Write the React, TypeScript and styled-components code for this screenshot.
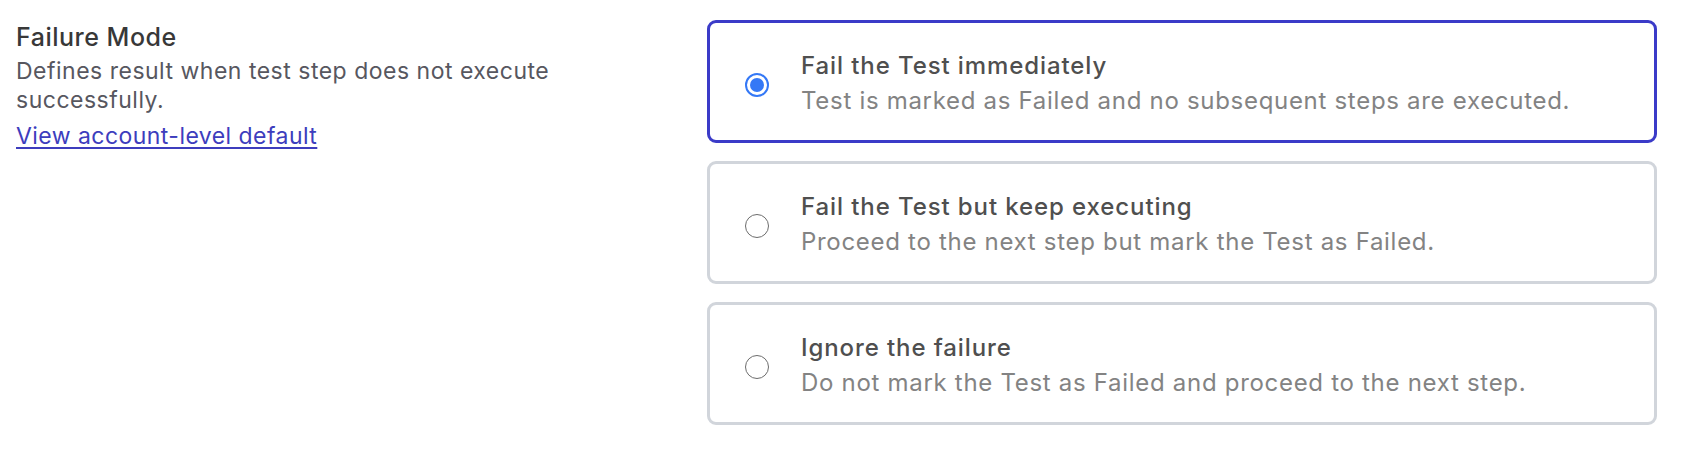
import { useState } from "react";
import styled, { createGlobalStyle } from "styled-components";

const GlobalStyle = createGlobalStyle`
    body {
        margin: 0;
        background: #ffffff;
        font-family: Inter, "Noto Sans", sans-serif;
    }
`

const Page = styled.div`
    display: flex;
    align-items: flex-start;
    padding: 20px 25px 20px 16px;
`

const Info = styled.div`
    width: 691px;
    flex-shrink: 0;
    padding-top: 3px;
`

const Heading = styled.h3`
    margin: 0;
    font-size: 25px;
    line-height: 28px;
    font-weight: 500;
    letter-spacing: 0.5px;
    color: #383838;
`

const Hint = styled.p`
    margin: 6px 0 0;
    width: 560px;
    font-size: 23px;
    line-height: 29px;
    letter-spacing: 0.5px;
    color: #57575f;
`

const DefaultLink = styled.a`
    display: inline-block;
    margin-top: 7px;
    font-size: 23px;
    line-height: 29px;
    letter-spacing: 0.45px;
    color: #3d3dbd;
    text-decoration: underline;
    text-underline-offset: 3px;
    cursor: pointer;
`

const Options = styled.div`
    flex: 1;
    display: flex;
    flex-direction: column;
    gap: 18px;
`

const Card = styled.label<{ $active: boolean }>`
    display: flex;
    align-items: center;
    gap: 32px;
    height: 123px;
    box-sizing: border-box;
    padding: 2px 30px 0 35px;
    border: 3px solid ${(p) => (p.$active ? "#3b3bc8" : "#d1d5db")};
    border-radius: 9px;
    cursor: pointer;
`

const Radio = styled.span<{ $checked: boolean }>`
    position: relative;
    flex-shrink: 0;
    width: 24px;
    height: 24px;
    margin-top: 4px;
    box-sizing: border-box;
    border-radius: 50%;
    border: ${(p) => (p.$checked ? "2px solid #3478f6" : "1.5px solid #6c6c6c")};
    background: #fff;

    &:after {
        content: "";
        display: ${(p) => (p.$checked ? "block" : "none")};
        position: absolute;
        inset: 3px;
        border-radius: 50%;
        background: #3478f6;
    }
`

const Texts = styled.div`
    display: flex;
    flex-direction: column;
    gap: 8px;
`

const Title = styled.span`
    font-size: 24px;
    line-height: 27px;
    font-weight: 500;
    letter-spacing: 0.9px;
    color: #4f4f4f;
`

const Desc = styled.span`
    font-size: 24px;
    line-height: 27px;
    letter-spacing: 0.7px;
    color: #838383;
`

const modes = [
    {
        id: "fail",
        title: "Fail the Test immediately",
        desc: "Test is marked as Failed and no subsequent steps are executed.",
    },
    {
        id: "continue",
        title: "Fail the Test but keep executing",
        desc: "Proceed to the next step but mark the Test as Failed.",
    },
    {
        id: "ignore",
        title: "Ignore the failure",
        desc: "Do not mark the Test as Failed and proceed to the next step.",
    },
];

const App = () => {
    const [mode, setMode] = useState("fail");
    return (
        <>
            <GlobalStyle />
            <Page>
                <Info>
                    <Heading>Failure Mode</Heading>
                    <Hint>Defines result when test step does not execute successfully.</Hint>
                    <DefaultLink>View account-level default</DefaultLink>
                </Info>
                <Options>
                    {modes.map((m) => (
                        <Card key={m.id} $active={mode === m.id} onClick={() => setMode(m.id)}>
                            <Radio $checked={mode === m.id} />
                            <Texts>
                                <Title>{m.title}</Title>
                                <Desc>{m.desc}</Desc>
                            </Texts>
                        </Card>
                    ))}
                </Options>
            </Page>
        </>
    )
}

export default App;
